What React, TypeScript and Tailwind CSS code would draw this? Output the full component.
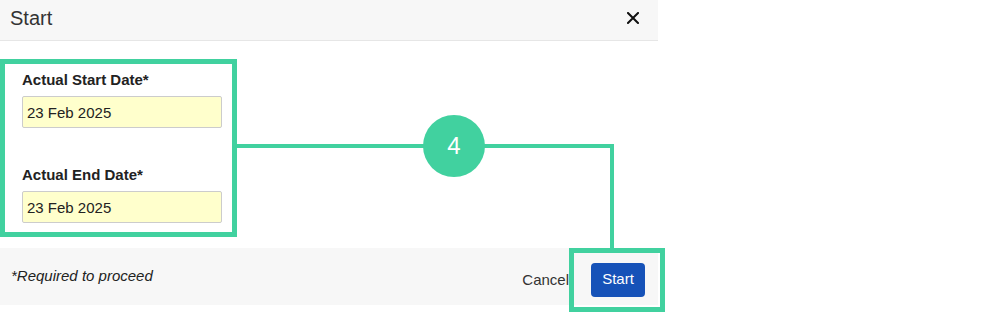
import React from 'react';

function DateField({ label, value }: { label: string; value: string }) {
  return (
    <div className="flex flex-col">
      <label className="h-6 mb-1 text-[15px] leading-6 font-bold text-[#222]">{label}</label>
      <input
        readOnly
        value={value}
        className="w-[200px] h-8 border border-[#cccccc] rounded-[2px] bg-[#ffffcc] px-[4px] text-[15px] text-[#222] outline-none"
      />
    </div>
  );
}

export default function App() {
  return (
    <div
      className="relative w-[994px] h-[312px] overflow-hidden bg-white"
      style={{ fontFamily: '"Liberation Sans", Arial, sans-serif' }}
    >
      <div className="flex flex-col w-[658px]">
        <div className="flex items-center justify-between h-[41px] bg-[#f7f7f7] border-b border-[#e6e6e6] pl-[10px] pr-[19px]">
          <h2 className="text-[20px] leading-6 text-[#333] -mt-[4px]">Start</h2>
          <button type="button" className="flex items-center justify-center w-3 h-3 -mt-[5px]">
            <svg width="12" height="12" viewBox="0 0 12 12">
              <path d="M1 1L11 11M11 1L1 11" stroke="#111" strokeWidth="2" strokeLinecap="square" />
            </svg>
          </button>
        </div>

        <div className="pt-[18px] pb-[11px]">
          <div className="w-[237px] border-[5px] border-[#41d19f] pt-[4px] pl-[17px] pr-[10px] pb-[9px]">
            <DateField label="Actual Start Date*" value="23 Feb 2025" />
            <div className="mt-[35px]">
              <DateField label="Actual End Date*" value="23 Feb 2025" />
            </div>
          </div>
        </div>

        <div className="flex items-center h-[57px] bg-[#f7f7f7] pl-[11px] pr-[13px]">
          <p className="text-[15px] italic text-[#222]">*Required to proceed</p>
          <div className="ml-auto mt-[6px] flex items-center">
            <button type="button" className="mr-[22px] mt-[2px] text-[15px] text-[#333]">Cancel</button>
            <button
              type="button"
              className="w-[54px] h-[34px] rounded-[4px] bg-[#1652b8] text-[15px] text-white"
            >
              Start
            </button>
          </div>
        </div>
      </div>

      {/* annotation overlay */}
      <div className="absolute left-[237px] top-[144px] w-[377px] h-[4px] bg-[#41d19f]" />
      <div className="absolute left-[610px] top-[144px] w-[4px] h-[105px] bg-[#41d19f]" />
      <div className="absolute left-[423px] top-[115px] w-[62px] h-[62px] rounded-full bg-[#41d19f] flex items-center justify-center text-[24px] text-white">
        4
      </div>
      <div className="absolute left-[569px] top-[248px] w-[96px] h-[64px] border-[5px] border-[#41d19f]" />
    </div>
  );
}
